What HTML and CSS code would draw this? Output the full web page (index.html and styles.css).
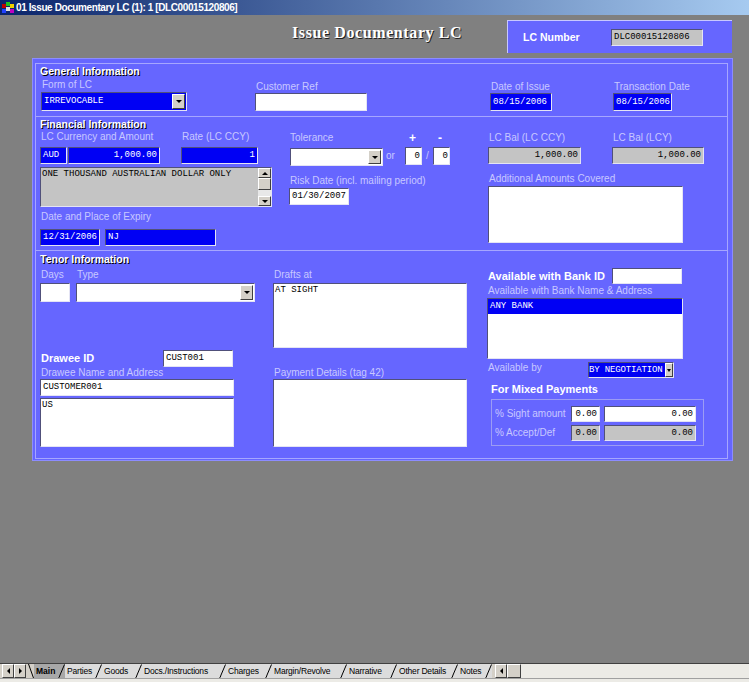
FILE: index.html
```html
<!DOCTYPE html>
<html>
<head>
<meta charset="utf-8">
<title>Issue Documentary LC</title>
<link rel="stylesheet" href="styles.css">
</head>
<body>
<div class="titlebar">
  <svg class="appicon" viewBox="0 0 12 12" width="12" height="12">
    <rect x="0" y="2" width="4" height="4" fill="#c00000"/>
    <rect x="4" y="0" width="4" height="4" fill="#20c020"/>
    <rect x="8" y="2" width="4" height="4" fill="#f0d000"/>
    <rect x="0" y="7" width="4" height="4" fill="#2040ff"/>
    <rect x="4" y="5" width="4" height="4" fill="#e0e0e0"/>
    <rect x="8" y="7" width="4" height="4" fill="#c000c0"/>
  </svg>
  <span class="titletext">01 Issue Documentary LC (1): 1 [DLC00015120806]</span>
</div>

<div class="header">
  <div class="doc-title">Issue Documentary LC</div>
  <div class="lcbox">
    <span class="lcbox-label">LC Number</span>
    <div class="fld gray f-lcno">DLC00015120806</div>
  </div>
</div>

<div class="panel">
  <!-- General Information -->
  <div class="sec sec1">
    <div class="sec-title t-gen">General Information</div>
    <div class="row">
      <div class="col g1">
        <div class="lbl">Form of LC</div>
        <div class="fld blue sel f-formlc"><span class="sel-text">IRREVOCABLE</span><span class="dd"></span></div>
      </div>
      <div class="col g2">
        <div class="lbl">Customer Ref</div>
        <div class="fld white f-custref"></div>
      </div>
      <div class="col g3">
        <div class="lbl">Date of Issue</div>
        <div class="fld blue f-doi">08/15/2006</div>
      </div>
      <div class="col g4">
        <div class="lbl">Transaction Date</div>
        <div class="fld blue f-trd">08/15/2006</div>
      </div>
    </div>
  </div>

  <!-- Financial Information -->
  <div class="sec sec2">
    <div class="col fL">
      <div class="sec-title t-fin">Financial Information</div>
      <div class="row lblrow">
        <div class="lbl l-ccy">LC Currency and Amount</div>
        <div class="lbl">Rate (LC CCY)</div>
      </div>
      <div class="row inrow">
        <div class="fld blue f-ccy">AUD</div>
        <div class="fld blue right f-amt">1,000.00</div>
        <div class="fld blue right f-rate">1</div>
      </div>
      <div class="fld gray ta f-words">
        <span class="ta-text">ONE THOUSAND AUSTRALIAN DOLLAR ONLY</span>
        <span class="vscroll"><span class="sb-btn up"></span><span class="sb-thumb"></span><span class="sb-track"></span><span class="sb-btn down"></span></span>
      </div>
      <div class="lbl l-expiry">Date and Place of Expiry</div>
      <div class="row exrow">
        <div class="fld blue f-exd">12/31/2006</div>
        <div class="fld blue f-exp">NJ</div>
      </div>
    </div>

    <div class="col fM">
      <div class="row lblrow">
        <div class="lbl l-tol">Tolerance</div>
        <div class="pm l-plus">+</div>
        <div class="pm">-</div>
      </div>
      <div class="row tolrow">
        <div class="fld white sel f-tol"><span class="sel-text"></span><span class="dd"></span></div>
        <span class="tol-or">or</span>
        <div class="fld white right f-pct">0</div>
        <span class="tol-slash">/</span>
        <div class="fld white right f-pct">0</div>
      </div>
      <div class="lbl l-risk">Risk Date (incl. mailing period)</div>
      <div class="fld white f-risk">01/30/2007</div>
    </div>

    <div class="col fR">
      <div class="row lblrow">
        <div class="lbl l-bal">LC Bal (LC CCY)</div>
        <div class="lbl">LC Bal (LCY)</div>
      </div>
      <div class="row inrow">
        <div class="fld gray right f-bal1">1,000.00</div>
        <div class="fld gray right f-bal2">1,000.00</div>
      </div>
      <div class="lbl l-addl">Additional Amounts Covered</div>
      <div class="fld white f-addl"></div>
    </div>
  </div>

  <!-- Tenor Information -->
  <div class="sec sec3">
    <div class="col tL">
      <div class="sec-title t-ten">Tenor Information</div>
      <div class="row lblrow2">
        <div class="lbl l-days">Days</div>
        <div class="lbl">Type</div>
      </div>
      <div class="row dayrow">
        <div class="fld white f-days"></div>
        <div class="fld white sel f-type"><span class="sel-text"></span><span class="dd"></span></div>
      </div>
      <div class="row drawee-row">
        <div class="blbl l-drawee">Drawee ID</div>
        <div class="fld white f-drawee">CUST001</div>
      </div>
      <div class="lbl l-dname">Drawee Name and Address</div>
      <div class="fld white f-dname">CUSTOMER001</div>
      <div class="fld white f-daddr">US</div>
    </div>

    <div class="col tM">
      <div class="lbl">Drafts at</div>
      <div class="fld white f-drafts">AT SIGHT</div>
      <div class="lbl l-pay">Payment Details (tag 42)</div>
      <div class="fld white f-pay"></div>
    </div>

    <div class="col tR">
      <div class="row bank-row">
        <div class="blbl l-bankid">Available with Bank ID</div>
        <div class="fld white f-bankid"></div>
      </div>
      <div class="lbl l-bankname">Available with Bank Name &amp; Address</div>
      <div class="listbox">
        <div class="list-sel">ANY BANK</div>
      </div>
      <div class="row avail-row">
        <div class="lbl l-availby">Available by</div>
        <div class="fld blue sel f-availby"><span class="sel-text">BY NEGOTIATION</span><span class="dd"></span></div>
      </div>
      <div class="blbl l-mixed">For Mixed Payments</div>
      <div class="mixbox">
        <div class="row mixrow">
          <div class="lbl l-mix">% Sight amount</div>
          <div class="fld white right f-mixp">0.00</div>
          <div class="fld white right f-mixa">0.00</div>
        </div>
        <div class="row mixrow mixrow2">
          <div class="lbl l-mix">% Accept/Def</div>
          <div class="fld gray right f-mixp">0.00</div>
          <div class="fld gray right f-mixa">0.00</div>
        </div>
      </div>
    </div>
  </div>
</div>

<div class="spacer"></div>

<div class="tabstrip">
  <div class="tabbar">
    <span class="navbtn"><span class="tri-l"></span></span>
    <span class="navbtn"><span class="tri-r"></span></span>
    <svg class="sep-first" viewBox="0 0 6 15" width="6" height="15"><path d="M0.5 0 L5.5 14" stroke="#000" fill="none"/></svg>
    <span class="tab active w-main"><span class="tab-text">Main</span><svg class="sep" viewBox="0 0 8 15" width="8" height="15"><path d="M0.5 15 Q2.5 14 3 11 L7.5 0.5" stroke="#000" fill="none"/></svg></span>
    <span class="tab w-parties"><span class="tab-text">Parties</span><svg class="sep" viewBox="0 0 8 15" width="8" height="15"><path d="M0.5 15 Q2.5 14 3 11 L7.5 0.5" stroke="#000" fill="none"/></svg></span>
    <span class="tab w-goods"><span class="tab-text">Goods</span><svg class="sep" viewBox="0 0 8 15" width="8" height="15"><path d="M0.5 15 Q2.5 14 3 11 L7.5 0.5" stroke="#000" fill="none"/></svg></span>
    <span class="tab w-docs"><span class="tab-text">Docs./Instructions</span><svg class="sep" viewBox="0 0 8 15" width="8" height="15"><path d="M0.5 15 Q2.5 14 3 11 L7.5 0.5" stroke="#000" fill="none"/></svg></span>
    <span class="tab w-charges"><span class="tab-text">Charges</span><svg class="sep" viewBox="0 0 8 15" width="8" height="15"><path d="M0.5 15 Q2.5 14 3 11 L7.5 0.5" stroke="#000" fill="none"/></svg></span>
    <span class="tab w-margin"><span class="tab-text">Margin/Revolve</span><svg class="sep" viewBox="0 0 8 15" width="8" height="15"><path d="M0.5 15 Q2.5 14 3 11 L7.5 0.5" stroke="#000" fill="none"/></svg></span>
    <span class="tab w-narr"><span class="tab-text">Narrative</span><svg class="sep" viewBox="0 0 8 15" width="8" height="15"><path d="M0.5 15 Q2.5 14 3 11 L7.5 0.5" stroke="#000" fill="none"/></svg></span>
    <span class="tab w-other"><span class="tab-text">Other Details</span><svg class="sep" viewBox="0 0 8 15" width="8" height="15"><path d="M0.5 15 Q2.5 14 3 11 L7.5 0.5" stroke="#000" fill="none"/></svg></span>
    <span class="tab w-notes"><span class="tab-text">Notes</span><svg class="sep" viewBox="0 0 8 15" width="8" height="15"><path d="M0.5 15 Q2.5 14 3 11 L7.5 0.5" stroke="#000" fill="none"/></svg></span>
    <span class="hscroll">
      <span class="navbtn"><span class="tri-l"></span></span>
      <span class="hthumb"></span>
    </span>
    <span class="hrest"></span>
  </div>
  <div class="tabfoot"></div>
</div>
</body>
</html>
```

FILE: styles.css
```css
* { box-sizing: border-box; }
html, body { margin: 0; padding: 0; }
body {
  width: 749px;
  height: 682px;
  overflow: hidden;
  background: #808080;
  font-family: "Liberation Sans", Arial, sans-serif;
  display: flex;
  flex-direction: column;
}

/* ---------- title bar ---------- */
.titlebar {
  flex: none;
  height: 15px;
  display: flex;
  align-items: center;
  gap: 2px;
  padding-left: 2px;
  background: linear-gradient(90deg, #0a246a 0%, #a6caf0 100%);
  color: #fff;
  font-weight: bold;
  font-size: 10px;
  letter-spacing: -0.4px;
  white-space: nowrap;
}
.appicon { flex: none; }

/* ---------- header ---------- */
.header {
  flex: none;
  height: 43px;
  display: flex;
  padding-left: 292px;
}
.doc-title {
  width: 215px;
  padding-top: 9px;
  font-family: "Liberation Serif", "Times New Roman", serif;
  font-weight: bold;
  font-size: 16px;
  line-height: 18px;
  letter-spacing: 0.6px;
  color: #fff;
  text-shadow: 1px 1px 0 #202020;
  white-space: nowrap;
}
.lcbox {
  margin-top: 5px;
  width: 225px;
  height: 33px;
  background: #6666ff;
  border-top: 1px solid #c8c8ff;
  border-left: 1px solid #c8c8ff;
  display: flex;
  align-items: center;
  padding-left: 15px;
}
.lcbox-label {
  width: 88px;
  color: #fff;
  font-weight: bold;
  font-size: 10.5px;
}
.f-lcno { width: 92px; height: 16px; line-height: 14px; }

/* ---------- panel ---------- */
.panel {
  flex: none;
  margin-left: 32px;
  width: 701px;
  height: 403px;
  background: #6666ff;
  border: 1px solid #8c8cff;
  padding: 4px 4px 1px 2px;
}
.sec {
  display: flex;
  border: 1px solid #a6a6ff;
  border-top: none;
  padding-left: 4px;
}
.sec1 { border-top: 1px solid #a6a6ff; height: 54px; flex-direction: column; }
.sec2 { height: 134px; }
.sec3 { height: 208px; }

.row { display: flex; }
.col { display: flex; flex-direction: column; flex: none; }

.sec-title {
  font-weight: bold;
  font-size: 10.5px;
  line-height: 12px;
  height: 12px;
  color: #fff;
  text-shadow: 1px 1px 0 #000;
  white-space: nowrap;
}
.lbl {
  font-size: 10px;
  line-height: 12px;
  height: 12px;
  color: #c8c8ff;
  white-space: nowrap;
  padding-left: 1px;
}
.blbl {
  font-weight: bold;
  font-size: 11px;
  color: #fff;
  white-space: nowrap;
  padding-left: 1px;
}
.pm {
  font-weight: bold;
  font-size: 12px;
  line-height: 12px;
  height: 12px;
  color: #fff;
}

/* fields */
.fld {
  flex: none;
  height: 17px;
  line-height: 15px;
  padding: 0 2px;
  border: 1px solid;
  border-color: #50507a #e4e4f4 #e4e4f4 #50507a;
  font-family: "Liberation Mono", "Courier New", monospace;
  font-size: 9px;
  white-space: nowrap;
  overflow: hidden;
}
.blue { background: #0000f4; color: #fff; }
.white { background: #fff; color: #000; }
.gray { background: #c4c4c4; color: #000; }
.right { text-align: right; }

.sel { display: flex; padding: 0 0 0 2px; }
.sel-text { flex: 1; overflow: hidden; }
.dd {
  flex: none;
  width: 13px;
  margin: 1px;
  background: #d4d0c8;
  border: 1px solid;
  border-color: #ffffff #404040 #404040 #ffffff;
  display: flex;
  align-items: center;
  justify-content: center;
}
.dd::after {
  content: "";
  border-left: 3px solid transparent;
  border-right: 3px solid transparent;
  border-top: 3px solid #000;
}

/* ---------- section 1 ---------- */
.t-gen { margin-top: 1px; }
.sec1 .row { margin-top: 2px; }
.g1 { margin-left: 1px; width: 147px; }
.g1 .fld { margin-top: 1px; }
.g2 { margin-left: 67px; width: 113px; padding-top: 2px; }
.g3 { margin-left: 122px; width: 63px; padding-top: 2px; }
.g4 { margin-left: 60px; width: 60px; padding-top: 2px; }
.f-formlc { width: 146px; height: 19px; line-height: 17px; }
.f-custref { width: 112px; height: 18px; }
.f-doi { width: 62px; height: 18px; line-height: 16px; }
.f-trd { width: 59px; height: 18px; line-height: 16px; }

/* ---------- section 2 ---------- */
.fL { width: 232px; }
.t-fin { margin-top: 1px; }
.fL .lblrow { margin-top: 1px; }
.l-ccy { width: 141px; }
.inrow { margin-top: 4px; }
.fR .inrow { margin-top: 3px; }
.f-ccy { width: 27px; }
.f-amt { width: 92px; margin-left: 1px; }
.f-rate { width: 77px; margin-left: 21px; }
.f-words {
  margin-top: 3px;
  width: 232px;
  height: 40px;
  display: flex;
  padding: 0 0 0 1px;
}
.ta-text { flex: 1; line-height: 13px; }
.vscroll {
  flex: none;
  width: 13px;
  display: flex;
  flex-direction: column;
  background: #e8e8e8;
}
.sb-btn {
  height: 10px;
  background: #d4d0c8;
  border: 1px solid;
  border-color: #ffffff #404040 #404040 #ffffff;
  display: flex;
  align-items: center;
  justify-content: center;
}
.sb-btn.up::after {
  content: "";
  border-left: 3px solid transparent;
  border-right: 3px solid transparent;
  border-bottom: 3px solid #000;
}
.sb-btn.down::after {
  content: "";
  border-left: 3px solid transparent;
  border-right: 3px solid transparent;
  border-top: 3px solid #000;
}
.sb-thumb {
  height: 12px;
  background: #d4d0c8;
  border: 1px solid;
  border-color: #ffffff #404040 #404040 #ffffff;
}
.sb-track { flex: 1; }
.l-expiry { margin-top: 4px; }
.exrow { margin-top: 6px; }
.f-exd { width: 60px; }
.f-exp { width: 111px; margin-left: 5px; }

.fM { margin-left: 17px; width: 165px; padding-top: 15px; }
.l-tol { width: 120px; }
.l-plus { width: 29px; }
.tolrow { margin-top: 3px; align-items: flex-start; }
.f-tol { width: 93px; height: 18px; margin-left: 1px; margin-top: 1px; }
.tol-or {
  width: 22px;
  padding-left: 3px;
  font-size: 10px;
  line-height: 18px;
  color: #c8c8ff;
}
.tol-slash {
  width: 11px;
  text-align: center;
  font-size: 10px;
  line-height: 18px;
  color: #c8c8ff;
}
.f-pct { width: 17px; height: 18px; padding: 0 1px; line-height: 16px; }
.l-risk { margin-top: 9px; }
.f-risk { width: 60px; margin-top: 1px; }

.fR { margin-left: 34px; width: 217px; padding-top: 15px; }
.l-bal { width: 124px; }
.f-bal1 { width: 93px; }
.f-bal2 { width: 92px; margin-left: 31px; }
.l-addl { margin-top: 9px; }
.f-addl { width: 195px; height: 57px; margin-top: 1px; }

/* ---------- section 3 ---------- */
.tL { width: 215px; }
.t-ten { margin-top: 2px; }
.lblrow2 { margin-top: 4px; }
.l-days { width: 36px; }
.dayrow { margin-top: 2px; }
.f-days { width: 30px; height: 19px; }
.f-type { width: 179px; height: 19px; margin-left: 6px; }
.drawee-row { margin-top: 48px; height: 17px; }
.l-drawee { width: 123px; line-height: 17px; }
.f-drawee { width: 70px; }
.f-dname { width: 194px; }
.f-daddr { width: 194px; height: 49px; margin-top: 2px; line-height: 13px; padding: 0 1px; }

.tM { margin-left: 18px; width: 194px; padding-top: 18px; }
.f-drafts { width: 194px; height: 65px; margin-top: 2px; line-height: 13px; padding: 0 1px; }
.l-pay { margin-top: 19px; }
.f-pay { width: 194px; height: 68px; }

.tR { margin-left: 20px; width: 218px; }
.bank-row { margin-top: 17px; height: 16px; }
.l-bankid { width: 125px; line-height: 16px; }
.f-bankid { width: 70px; height: 16px; }
.l-bankname { margin-top: 1px; }
.listbox {
  margin-top: 1px;
  width: 196px;
  height: 61px;
  background: #fff;
  border: 1px solid;
  border-color: #50507a #e4e4f4 #e4e4f4 #50507a;
}
.list-sel {
  height: 15px;
  line-height: 14px;
  padding-left: 2px;
  background: #0000f4;
  color: #fff;
  font-family: "Liberation Mono", "Courier New", monospace;
  font-size: 9px;
}
.avail-row { margin-top: 3px; height: 16px; }
.l-availby { width: 101px; }
.f-availby { width: 86px; height: 16px; line-height: 14px; padding-left: 0; }
.f-availby .sel-text { letter-spacing: -0.15px; overflow: visible; }
.f-availby .dd { width: 8px; margin: 0; }
.f-availby .dd::after { border-left-width: 2px; border-right-width: 2px; }
.l-mixed { margin-top: 4px; line-height: 14px; padding-left: 4px; }
.mixbox {
  margin-top: 3px;
  margin-left: 4px;
  width: 213px;
  height: 47px;
  border: 1px solid #9c9cf4;
  padding: 6px 0 0 3px;
}
.mixrow { height: 16px; }
.mixrow2 { margin-top: 3px; }
.l-mix { width: 76px; line-height: 16px; height: 16px; padding-left: 0; }
.f-mixp { width: 29px; height: 16px; line-height: 14px; }
.f-mixa { width: 92px; height: 16px; line-height: 14px; margin-left: 4px; }

/* ---------- bottom tab strip ---------- */
.spacer { flex: 1; }
.tabstrip { flex: none; height: 19px; display: flex; flex-direction: column; }
.tabbar {
  height: 15px;
  display: flex;
  align-items: stretch;
  background: #d4d0c8;
  border-top: 1px solid #404040;
  padding-left: 2px;
  font-size: 8.5px;
  letter-spacing: -0.2px;
}
.tabfoot { flex: 1; background: #ecebe6; border-top: 1px solid #a0a0a0; }
.navbtn {
  flex: none;
  width: 12px;
  background: #d4d0c8;
  border: 1px solid;
  border-color: #ffffff #404040 #404040 #ffffff;
  display: flex;
  align-items: center;
  justify-content: center;
}
.tri-l {
  border-top: 3px solid transparent;
  border-bottom: 3px solid transparent;
  border-right: 3px solid #000;
}
.tri-r {
  border-top: 3px solid transparent;
  border-bottom: 3px solid transparent;
  border-left: 3px solid #000;
}
.sep-first { flex: none; margin-left: 2px; }
.tab {
  flex: none;
  display: flex;
  align-items: stretch;
  padding-left: 2px;
  color: #000;
  white-space: nowrap;
  background: #dcdcdc;
}
.tab-text { flex: 1; line-height: 14px; }
.tab.active { background: #a8a8a8; font-weight: bold; letter-spacing: 0; }
.sep { flex: none; }
.w-main { width: 31px; }
.w-parties { width: 37px; }
.w-goods { width: 40px; }
.w-docs { width: 84px; }
.w-charges { width: 46px; }
.w-margin { width: 75px; }
.w-narr { width: 50px; }
.w-other { width: 61px; }
.w-notes { width: 34px; }
.hscroll {
  flex: none;
  margin-left: 3px;
  width: 26px;
  display: flex;
}
.hthumb {
  flex: 1;
  background: #d4d0c8;
  border: 1px solid;
  border-color: #ffffff #404040 #404040 #ffffff;
}
.hrest { flex: 1; background: #ecebe6; }
```
